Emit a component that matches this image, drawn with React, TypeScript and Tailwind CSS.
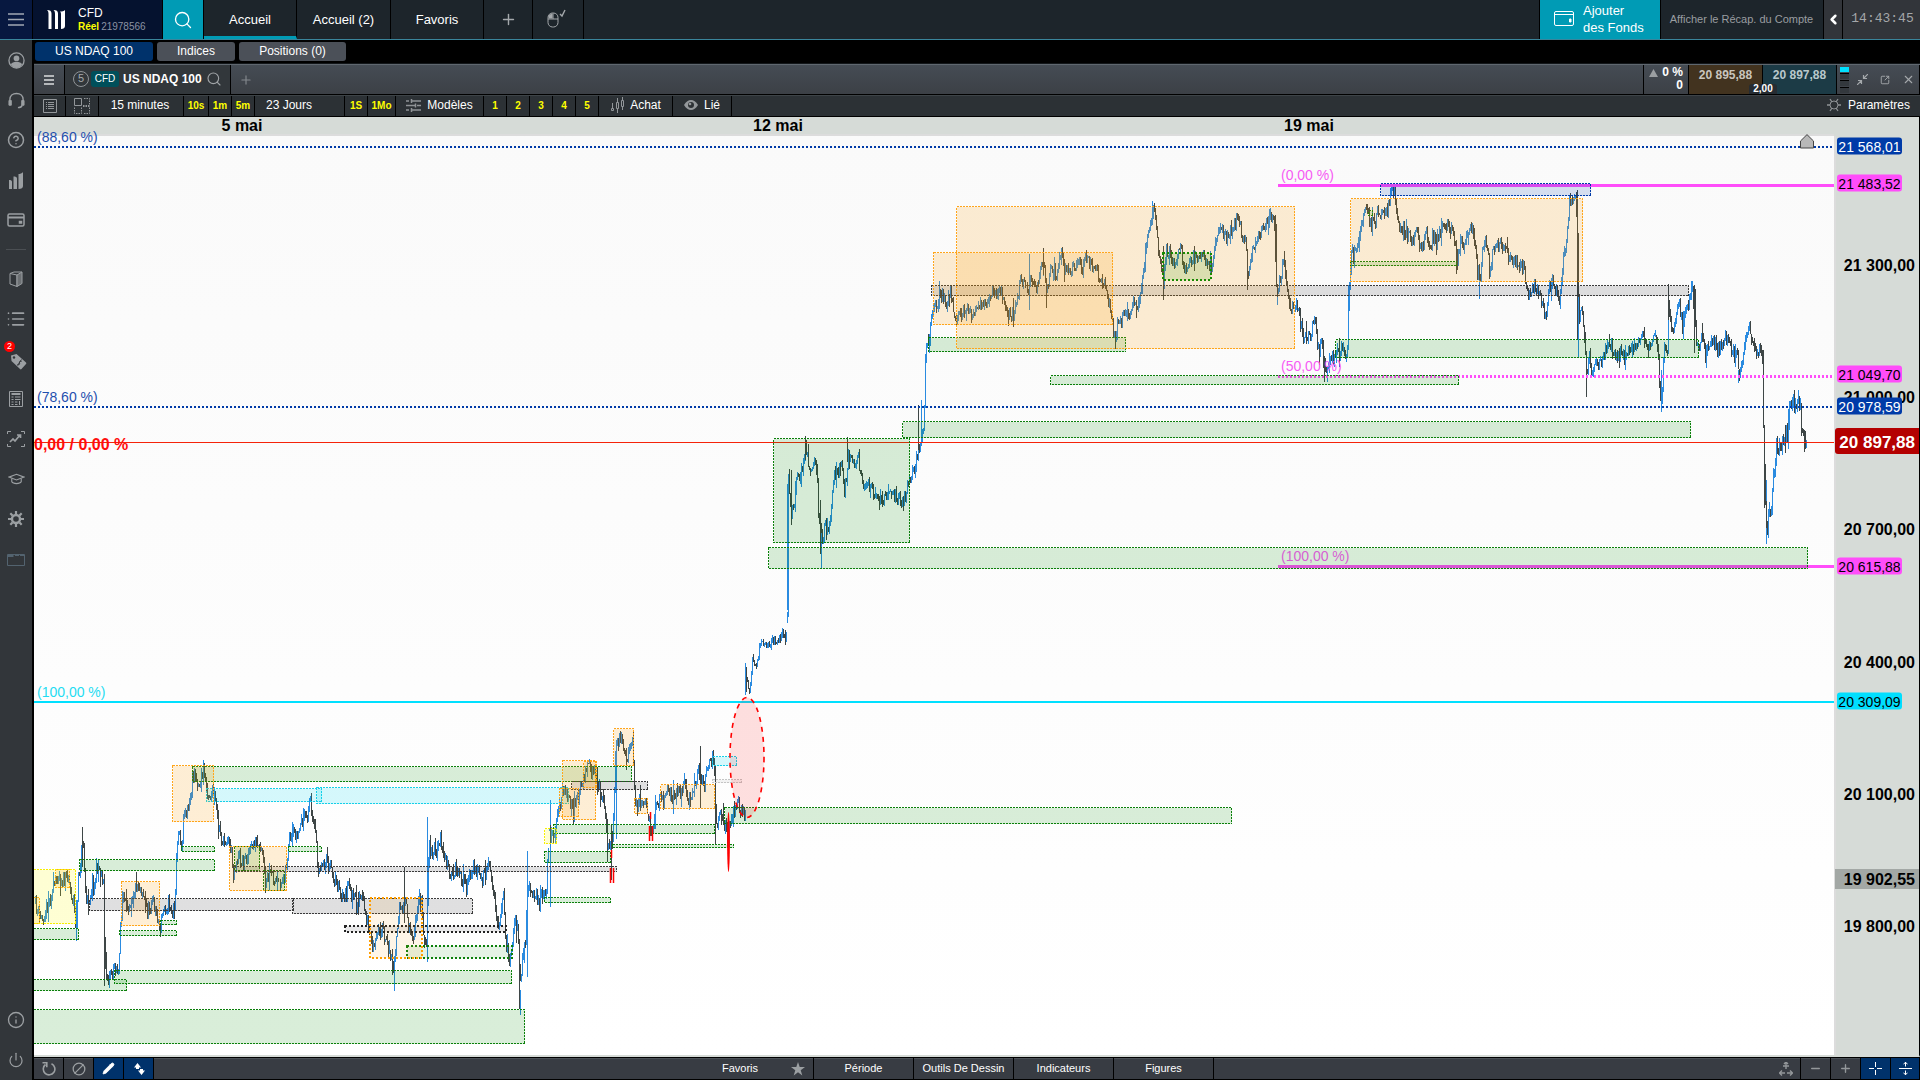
import type { ReactNode } from 'react'
import {
  ChevronLeft, Ban, Pencil, Plus, Minus, CircleHelp, List, Info, Power, Search, X, SquareArrowOutUpRight,
} from 'lucide-react'

// plot canvas, in chart units
const LEFT = 34
const TOP = 136
const WIDTH = 1800
const HEIGHT = 919

const priceToY = (price: number) => 265 + (21300 - price) * 0.44083
const topPct = (y: number) => `${((y - TOP) / HEIGHT) * 100}%`
const leftPct = (x: number) => `${((x - LEFT) / WIDTH) * 100}%`

type Segment = { x: number; y: number; sx: number; vol: number; points: number[] }

// price path: flat x,y pairs in local units of each segment
const SEGMENTS: Segment[] = [
  {
    x: 0, y: 740, sx: 2.8, vol: 13,
    points: [
      97, 490, 108, 525, 118, 535, 125, 520, 133, 490, 145, 460, 155, 420, 162, 400, 170, 420, 178, 425, 190, 400, 197, 460,
      205, 480, 212, 580, 218, 430, 224, 370, 231, 280, 236, 420, 241, 490, 250, 470, 256, 430, 263, 440, 268, 390, 275, 380,
      285, 410, 289, 440, 292, 650, 297, 700, 303, 720, 308, 690, 316, 700, 320, 665, 326, 690, 332, 700, 336, 560, 341, 480,
      346, 470, 352, 510, 360, 490, 372, 460, 383, 430, 392, 440, 402, 470, 412, 520, 420, 500, 425, 480, 432, 500, 440, 530,
      446, 570, 452, 530, 460, 500, 472, 490, 482, 520, 488, 490, 492, 380, 499, 260, 508, 330, 514, 200, 520, 220, 528, 210,
      538, 120, 545, 90, 553, 140, 562, 110, 570, 90, 578, 140, 586, 170, 595, 160, 601, 180, 608, 250, 618, 290, 626, 310,
      636, 290, 645, 320, 652, 400, 658, 370, 668, 350, 680, 370, 690, 345, 700, 330, 712, 310, 722, 330, 734, 340, 742, 430,
      755, 400, 765, 410, 778, 440, 790, 420, 802, 370, 808, 310, 815, 300, 823, 280, 832, 290, 840, 250, 850, 235, 860, 220,
      867, 180, 875, 220, 883, 290, 888, 380, 895, 380, 905, 365, 915, 375, 925, 390, 935, 415, 945, 440, 955, 475, 965, 465,
      973, 440, 985, 465, 997, 490, 1012, 470, 1020, 510, 1030, 560, 1038, 600, 1047, 630, 1056, 580, 1068, 560, 1078, 610,
      1090, 630, 1102, 690, 1110, 570, 1118, 490, 1126, 530, 1133, 480, 1142, 550, 1155, 590, 1163, 530, 1172, 490, 1180, 480,
      1187, 620, 1194, 600, 1197, 400, 1200, 310, 1210, 340, 1222, 340, 1232, 300, 1240, 340, 1250, 370, 1258, 410, 1268, 400,
      1278, 380, 1290, 410, 1305, 440, 1315, 400, 1325, 385, 1337, 395, 1350, 420, 1360, 400, 1368, 380, 1378, 430, 1388, 520,
      1396, 560, 1404, 490, 1410, 470, 1416, 620, 1425, 650, 1433, 620, 1441, 530, 1448, 570, 1454, 690, 1458, 740, 1464, 620,
      1470, 600, 1475, 460, 1482, 450, 1490, 480, 1500, 475, 1512, 465, 1520, 450, 1528, 470, 1532, 350, 1537, 280,
    ],
  },
  {
    x: 500, y: 640, sx: 3, vol: 13,
    points: [
      145, 570, 152, 600, 162, 590, 168, 540, 176, 500, 185, 460, 193, 450, 203, 470, 212, 505, 220, 500, 230, 460, 240, 450,
      250, 410, 262, 370, 272, 390, 285, 400, 292, 440, 300, 450, 310, 480, 316, 540, 322, 610, 330, 620, 336, 600, 341, 480,
      345, 340, 352, 310, 362, 300, 370, 330, 378, 360, 388, 320, 396, 310, 400, 400, 404, 490, 412, 500, 420, 480, 428, 500,
      435, 490, 445, 530, 453, 570, 462, 530, 468, 495, 476, 480, 482, 450, 488, 490, 496, 460, 508, 460, 520, 480, 530, 450,
      545, 450, 553, 430, 560, 460, 570, 470, 580, 455, 588, 410, 597, 390, 603, 430, 612, 430, 620, 380, 630, 370, 640, 360,
      645, 500, 648, 570, 656, 510, 665, 510, 672, 560, 684, 590, 692, 530, 702, 520, 712, 480, 722, 510, 730, 520, 735, 510,
    ],
  },
  {
    x: 500, y: 640, sx: 3, vol: 8,
    points: [
      737, 120, 742, 130, 746, 160, 752, 120, 756, 60, 765, 90, 775, 40, 782, -10, 790, 15, 800, 10, 815, 5, 830, 0, 840, -6,
      846, -20, 855, -3, 860, -22,
    ],
  },
  {
    x: 740, y: 180, sx: 2.703, vol: 11,
    points: [
      127, 1330, 128, 900, 131, 900, 137, 1010, 145, 970, 152, 900, 160, 890, 168, 880, 176, 800, 183, 850, 192, 870, 200, 850,
      207, 870, 211, 1000, 217, 1050, 222, 1100, 228, 1030, 236, 1050, 245, 980, 252, 880, 258, 890, 265, 870, 273, 860,
      281, 930, 288, 880, 291, 820, 300, 830, 310, 860, 318, 820, 325, 890, 335, 920, 348, 910, 360, 935, 372, 950, 382, 975,
      392, 950, 405, 930, 418, 945, 430, 950, 438, 965, 446, 940, 455, 910, 465, 880, 475, 840, 484, 800, 490, 750, 496, 750,
      497, 680, 500, 560, 503, 480, 511, 480, 516, 420, 522, 380, 530, 390, 538, 340, 546, 335, 555, 380, 566, 330, 574, 350,
      578, 415, 588, 410, 600, 400, 612, 385, 625, 410, 638, 390, 650, 380, 662, 370, 672, 345, 688, 340, 700, 320, 708, 350,
      718, 390, 726, 400, 738, 400, 748, 360, 757, 290, 768, 310, 778, 330, 783, 300, 792, 320, 802, 330, 810, 260, 820, 260,
      829, 330, 838, 280, 845, 260, 855, 290, 863, 240, 870, 220, 876, 270, 888, 270, 900, 265, 912, 250, 925, 270, 935, 230,
      945, 250, 960, 260, 972, 310, 983, 300, 992, 350, 1002, 400, 1012, 480, 1020, 430, 1030, 430, 1042, 385, 1052, 400,
      1060, 370, 1070, 370, 1080, 370, 1088, 280, 1097, 200, 1105, 160, 1115, 90, 1122, 110, 1130, 220, 1140, 260, 1144, 310,
      1150, 210, 1160, 230, 1172, 245, 1182, 230, 1190, 200, 1198, 270, 1206, 275, 1218, 240, 1230, 230, 1245, 220, 1258, 235,
      1270, 250, 1275, 260, 1283, 200, 1292, 145, 1302, 155, 1314, 180, 1328, 150, 1340, 120, 1352, 140, 1358, 190, 1366, 170,
      1371, 290, 1380, 220, 1390, 195, 1400, 170, 1412, 150, 1422, 120, 1435, 110, 1446, 130, 1449, 340, 1458, 300, 1470, 240,
      1477, 330, 1487, 390, 1497, 380,
    ],
  },
  {
    x: 1280, y: 160, sx: 2.8, vol: 12,
    points: [
      40, 450, 48, 430, 56, 490, 65, 540, 75, 525, 86, 520, 95, 470, 103, 550, 108, 580, 115, 540, 124, 640, 132, 640, 140, 590,
      148, 600, 157, 560, 165, 580, 173, 550, 181, 580, 187, 580, 190, 450, 194, 360, 200, 260, 206, 290, 214, 250, 225, 210,
      238, 130, 248, 180, 258, 190, 266, 200, 272, 140, 280, 160, 290, 140, 300, 150, 308, 95, 320, 95, 326, 160, 332, 210,
      345, 215, 360, 230, 372, 240, 383, 190, 390, 270, 400, 250, 410, 220, 420, 250, 430, 230, 440, 240, 450, 215, 460, 185,
      470, 200, 480, 220, 488, 250, 494, 310, 503, 250, 515, 250, 525, 220, 534, 200, 545, 250, 552, 340, 560, 340, 570, 240,
      580, 270, 586, 340, 595, 270, 605, 255, 617, 240, 628, 270, 642, 290, 655, 300, 670, 325, 680, 320, 690, 390, 700, 405,
      710, 370, 722, 390, 735, 440, 743, 480, 752, 390, 762, 360, 770, 390, 782, 430, 788, 330, 795, 290, 803, 230, 808, 130,
      817, 110, 827, 100, 832, 250, 836, 480, 842, 430, 848, 480, 852, 520, 858, 660, 864, 560, 870, 640, 880, 620, 892, 610,
      903, 600, 913, 560, 920, 545, 930, 580, 940, 600, 952, 580, 965, 585, 977, 570, 990, 560, 1002, 550, 1015, 530, 1028, 545,
      1040, 545, 1050, 530, 1058, 580, 1063, 700, 1068, 740, 1071, 620, 1076, 540, 1083, 600, 1087, 420, 1095, 500, 1100, 510,
      1107, 470, 1117, 430, 1127, 510, 1135, 440, 1145, 430, 1153, 390, 1160, 400, 1164, 550, 1172, 560, 1180, 510, 1190, 590,
      1200, 560, 1212, 540, 1225, 570, 1235, 550, 1248, 535, 1258, 560, 1270, 580, 1280, 590, 1286, 640, 1294, 600, 1302, 520,
      1312, 505, 1322, 560, 1330, 580, 1340, 570, 1349, 570, 1352, 760, 1355, 930, 1359, 1080, 1363, 1110,
    ],
  },
  {
    x: 1280, y: 160, sx: 2.8, vol: 20,
    points: [
      1363, 1090, 1368, 1040, 1373, 1080, 1378, 1000, 1384, 900, 1390, 850, 1396, 870, 1401, 880, 1405, 820, 1412, 850,
      1418, 820, 1424, 760, 1430, 730, 1440, 720, 1448, 740, 1455, 740, 1461, 820, 1466, 850, 1474, 855,
    ],
  },
]

// long wicks: x, high, low
const UP_WICKS = [
  [427, 817, 962], [527, 851, 977], [520, 990, 1015], [394, 960, 991], [203, 760, 785], [787, 484, 610], [821, 530, 569],
  [921, 400, 446], [1029, 254, 310], [1152, 201, 225], [1277, 290, 305], [1348, 285, 345], [1578, 285, 357], [1479, 265, 299],
  [1661, 370, 412], [1691, 281, 300], [1766, 480, 544], [1738, 370, 383], [616, 740, 839], [550, 800, 907], [76, 900, 941],
  [745, 663, 695],
]
const DOWN_WICKS = [
  [82, 827, 867], [104, 874, 986], [404, 867, 923], [519, 958, 1009], [700, 746, 808], [715, 765, 844], [918, 405, 450],
  [820, 500, 554], [847, 437, 462], [805, 436, 460], [1043, 248, 275], [1046, 290, 308], [1008, 310, 326], [1163, 246, 300],
  [1247, 250, 290], [1275, 215, 262], [1115, 340, 349], [1577, 190, 340], [1586, 360, 397], [1668, 284, 320], [1694, 285, 353],
  [1763, 350, 400], [1764, 440, 508], [607, 819, 862], [611, 825, 880], [791, 470, 525], [1456, 250, 274], [1324, 360, 382],
  [746, 667, 692],
]

function buildBars() {
  let seed = 11
  const rand = () => {
    seed = (seed * 16807) % 2147483647
    return seed / 2147483647
  }
  let up = ''
  let down = ''
  for (const s of SEGMENTS) {
    const xs: number[] = []
    const ys: number[] = []
    for (let i = 0; i < s.points.length; i += 2) {
      xs.push(s.x + s.points[i] / s.sx)
      ys.push(s.y + s.points[i + 1] / 3)
    }
    let k = 0
    let prev = ys[0]
    for (let x = Math.ceil(xs[0]); x <= xs[xs.length - 1]; x++) {
      while (k < xs.length - 2 && xs[k + 1] < x) k++
      const t = Math.min(1, Math.max(0, (x - xs[k]) / (xs[k + 1] - xs[k])))
      const y = ys[k] + (ys[k + 1] - ys[k]) * t + (rand() - 0.5) * s.vol
      const wick = rand() < 0.15 ? s.vol : s.vol * 0.4
      const high = Math.round(Math.min(prev, y) - rand() * wick)
      const low = Math.round(Math.max(prev, y) + rand() * wick)
      const bar = `M${x + 0.5} ${high}V${low}`
      if (y < prev) up += bar
      else down += bar
      prev = y
    }
  }
  for (const [x, a, b] of UP_WICKS) up += `M${x + 0.5} ${a}V${b}`
  for (const [x, a, b] of DOWN_WICKS) down += `M${x + 0.5} ${a}V${b}`
  return { up, down }
}

const BARS = buildBars()

type ZoneKind =
  | 'green' | 'greenBold' | 'greenDeep' | 'grey' | 'greyBold' | 'greySoft' | 'blue' | 'cyan' | 'orange' | 'orangeBold' | 'yellow'

const ZONE_STYLE: Record<ZoneKind, { fill: string; opacity: number; stroke: string; bold?: boolean }> = {
  green: { fill: '#008a00', opacity: 0.15, stroke: '#0a7f0a' },
  greenBold: { fill: '#008a00', opacity: 0.1, stroke: '#0a7f0a', bold: true },
  greenDeep: { fill: '#2f9a00', opacity: 0.16, stroke: '#178a00', bold: true },
  grey: { fill: '#222228', opacity: 0.14, stroke: '#3a3a3a' },
  greyBold: { fill: '#222228', opacity: 0.1, stroke: '#222222', bold: true },
  greySoft: { fill: '#222228', opacity: 0.05, stroke: '#c4c4c4' },
  blue: { fill: '#003eb0', opacity: 0.15, stroke: '#003ba8' },
  cyan: { fill: '#00d8f5', opacity: 0.16, stroke: '#16cfe8' },
  orange: { fill: '#ff9d00', opacity: 0.16, stroke: '#ffa51a' },
  orangeBold: { fill: '#ff9d00', opacity: 0.09, stroke: '#ff9d00', bold: true },
  yellow: { fill: '#ffff00', opacity: 0.17, stroke: '#f7ee00' },
}

// x1, y1, x2, y2
const ZONES: [ZoneKind, number, number, number, number][] = [
  ['green', 30, 928, 79, 939], ['green', 79, 859, 215, 870], ['green', 181, 846, 215, 851], ['green', 192, 766, 632, 781],
  ['green', 288, 846, 322, 851], ['green', 234, 846, 260, 870], ['green', 263, 870, 285, 890], ['green', 119, 930, 177, 935],
  ['green', 160, 920, 177, 924], ['green', 114, 970, 512, 983], ['green', 30, 979, 127, 990], ['green', 30, 1009, 525, 1043],
  ['greenBold', 406, 945, 512, 957], ['green', 544, 851, 611, 862], ['green', 553, 824, 715, 833], ['green', 612, 844, 734, 847],
  ['green', 544, 897, 611, 902], ['green', 724, 807, 1232, 823], ['green', 773, 438, 910, 542], ['green', 902, 421, 1691, 437],
  ['green', 768, 547, 1808, 568], ['green', 928, 337, 1126, 351], ['green', 1050, 375, 1459, 384],
  ['green', 1350, 261, 1457, 265], ['green', 1335, 339, 1699, 357], ['green', 1368, 210, 1373, 215],
  ['grey', 89, 898, 294, 910], ['grey', 292, 898, 473, 913], ['grey', 233, 866, 617, 871], ['greyBold', 344, 925, 506, 931],
  ['grey', 571, 781, 648, 789], ['greySoft', 712, 779, 742, 782], ['grey', 931, 285, 1689, 295],
  ['blue', 1380, 183, 1591, 195],
  ['cyan', 206, 788, 322, 801], ['cyan', 316, 787, 569, 803], ['cyan', 712, 756, 737, 765],
  ['orange', 172, 765, 214, 821], ['orange', 121, 881, 160, 925], ['orange', 229, 846, 287, 890],
  ['orangeBold', 369, 897, 422, 957], ['orange', 30, 897, 40, 923], ['orange', 55, 869, 70, 887], ['orange', 562, 760, 596, 819],
  ['orange', 583, 761, 597, 787], ['orange', 559, 788, 579, 816], ['orange', 613, 728, 634, 765], ['orange', 634, 798, 648, 813],
  ['orange', 660, 784, 715, 808], ['orange', 956, 206, 1295, 348], ['orange', 933, 252, 1113, 324],
  ['orange', 1350, 198, 1583, 281],
  ['yellow', 30, 869, 76, 923], ['yellow', 544, 828, 557, 843],
  ['greenDeep', 1162, 252, 1211, 279],
]

const PLOT_LABELS = [
  { text: '(88,60 %)', x: 37, y: 137, className: 'text-sm text-[#1f4fae]' },
  { text: '(78,60 %)', x: 37, y: 397, className: 'text-sm text-[#1f4fae]' },
  { text: '(100,00 %)', x: 37, y: 692, className: 'text-sm text-[#1fdcf2]' },
  { text: '(0,00 %)', x: 1281, y: 175, className: 'text-sm text-[#f65cf4]' },
  { text: '(50,00 %)', x: 1281, y: 366, className: 'text-sm text-[#f65cf4]' },
  { text: '(100,00 %)', x: 1281, y: 556, className: 'text-sm text-[#d65fd3]' },
  { text: '0,00 / 0,00 %', x: 34, y: 445, className: 'text-base font-bold text-[#ff0d0d]' },
]

const AXIS_TICKS = [
  { price: 21300, text: '21 300,00' },
  { price: 21000, text: '21 000,00' },
  { price: 20700, text: '20 700,00' },
  { price: 20400, text: '20 400,00' },
  { price: 20100, text: '20 100,00' },
  { price: 19800, text: '19 800,00' },
]

const AXIS_TAGS = [
  { price: 21568.01, text: '21 568,01', className: 'bg-[#003ba8] text-white' },
  { price: 21483.52, text: '21 483,52', className: 'bg-[#ff4dfa] text-black' },
  { price: 21049.7, text: '21 049,70', className: 'bg-[#ff4dfa] text-black' },
  { price: 20978.59, text: '20 978,59', className: 'bg-[#003ba8] text-white' },
  { price: 20615.88, text: '20 615,88', className: 'bg-[#ff4dfa] text-black' },
  { price: 20309.09, text: '20 309,09', className: 'bg-[#00dfff] text-black' },
]

function LogoBars() {
  return (
    <svg viewBox="0 0 18 19" className="h-[19px] w-[18px]" fill="currentColor">
      <path d="M0 0c3 0 4.500 1 4.500 3.500V19H1.500V4C1.500 2 1 .8 0 0zM6.500 0c3 0 4.500 1 4.500 3.500V19H8V4C8 2 7.500.8 6.500 0zM13 1.500C15 1.500 17 1 18 0v16c0 2-1.500 3-4 3V4c0-1.200-.3-2-1-2.500z" />
    </svg>
  )
}

function BarsIcon() {
  return (
    <svg viewBox="0 0 14 17" className="h-[17px] w-3.5" fill="currentColor">
      <path d="M0 8c2 0 3 .5 3 2v7H0zM4.500 4.500c2 0 3.500.5 3.500 2V17H4.500zM9.500 2C11 2 13 1.500 14 0v14c0 2-1.500 3-4.500 3z" />
    </svg>
  )
}

function UserIcon() {
  return (
    <svg viewBox="0 0 18 18" className="size-[17px]" fill="none" stroke="currentColor" strokeWidth="1.400">
      <circle cx="9" cy="9" r="8" />
      <circle cx="9" cy="6.800" r="3" fill="currentColor" stroke="none" />
      <path d="M3 13c1-2 3-2.500 6-2.500s5 .5 6 2.500c-1.500 2.500-3.500 4-6 4s-4.500-1.500-6-4z" fill="currentColor" stroke="none" />
    </svg>
  )
}

function HeadsetIcon() {
  return (
    <svg viewBox="0 0 18 18" className="size-[17px]" fill="none" stroke="currentColor" strokeWidth="1.500">
      <path d="M2 10V8c0-4 3-6.500 7-6.500S16 4 16 8v2" />
      <path d="M1 9h2.500v5H1zM14.500 9H17v5h-2.500z" fill="currentColor" strokeWidth="1" />
      <path d="M15 14c-.5 2-2 2.500-4.500 2.500" />
    </svg>
  )
}

function CardIcon() {
  return (
    <svg viewBox="0 0 18 14" className="h-3.5 w-[18px]" fill="none" stroke="currentColor" strokeWidth="1.500">
      <rect x="1" y="1" width="16" height="12" rx="1.500" />
      <path d="M1 4.500h16" strokeWidth="2" />
      <path d="M12.500 8.500h2v1.500h-2z" />
    </svg>
  )
}

function LeafletIcon() {
  return (
    <svg viewBox="0 0 14 16" className="h-4 w-3.5" fill="none" stroke="currentColor">
      <path d="M1 2.500L8 4v11.500L1 13zM1 2.500L5 1h8" />
      <path d="M8 4l5-3v11.500l-5 3z" fill="#6d7174" />
    </svg>
  )
}

function TagIcon() {
  return (
    <svg viewBox="0 0 17 17" className="mt-1 ml-1 size-[17px]">
      <path d="M1 2.500L6.500 1 16 9.500c.5.500.5 1 0 1.500l-4.500 5c-.5.500-1 .5-1.500 0L1.500 8z" fill="currentColor" />
      <circle cx="4" cy="4.500" r="1.200" fill="#32363a" />
      <path d="M11.500 8.500c-1.500-1-2.500.5-2 1.500s-.5 2.500-2 1.500M11.500 6.500l-4 6" stroke="#32363a" fill="none" />
    </svg>
  )
}

function ReportIcon() {
  return (
    <svg viewBox="0 0 14 16" className="h-4 w-3.5" fill="none" stroke="currentColor">
      <path d="M.5.500h13v15H.5z" />
      <path d="M2.500 3h9" strokeWidth="2" />
      <path d="M2.500 6h2M6 6h5.500M2.500 8.500h2M6 8.500h5.500M2.500 11h2M6 11h2.500M2.500 13.500h2M6 13.500h2.500M10.500 10v4" />
    </svg>
  )
}

function ScanChart() {
  return (
    <svg viewBox="0 0 18 18" className="size-[18px]" fill="none" stroke="currentColor">
      <path d="M.5 4V1.500H4M14 1.500h3.500V4M.5 14v2.500H4M14 16.500h3.500V14" />
      <path d="M3 12l3-3 2 2 5-6M10 5h3.500v3" strokeWidth="1.700" />
    </svg>
  )
}

function CapIcon() {
  return (
    <svg viewBox="0 0 18 12" className="h-3 w-[17px]" fill="none" stroke="currentColor" strokeWidth="1.200">
      <path d="M1 4l8-3 8 3-8 3z" />
      <path d="M4 5.500V9c1.500 2.500 8.500 2.500 10 0V5.500" />
    </svg>
  )
}

function CogIcon() {
  return (
    <svg viewBox="0 0 16 16" className="size-4" fill="none" stroke="currentColor">
      <circle cx="8" cy="8" r="4" strokeWidth="2.400" />
      <path
        d="M8 0v3M8 13v3M0 8h3M13 8h3M2.300 2.300l2.200 2.200M11.500 11.500l2.200 2.200M13.700 2.300l-2.200 2.200M4.500 11.500l-2.200 2.200"
        strokeWidth="2.200"
      />
    </svg>
  )
}

function WindowIcon() {
  return (
    <svg viewBox="0 0 18 13" className="h-[13px] w-[18px]" fill="none" stroke="currentColor">
      <path d="M.5 1.500h17v11H.5z" />
      <path d="M.5 3h6M8 2h4M13 2h4" strokeWidth="2" />
    </svg>
  )
}

function MouseIcon() {
  return (
    <svg viewBox="0 0 20 20" className="size-5" fill="none" stroke="#a4a8ab">
      <rect x="2" y="4" width="10" height="14" rx="4.500" />
      <path d="M2 10h10M7 4v6" />
      <path d="M3 9V6.500L6 5v4z" fill="#a4a8ab" />
      <path d="M14 5l2 2 3-6" strokeWidth="1.400" />
    </svg>
  )
}

function CandlesIcon() {
  return (
    <svg viewBox="0 0 16 16" className="size-4" fill="none" stroke="#93979a">
      <path d="M2.500 6v5M7.500 1v4M7.500 12v4M12.500 0v3M12.500 10v3" />
      <path d="M1.500 11.500h2v2h-2zM6.500 5.500h2v6h-2zM11.500 3.500h2v6h-2z" />
    </svg>
  )
}

function GridIcon() {
  return (
    <svg viewBox="0 0 16 16" className="size-4" fill="none" stroke="#93979a">
      <path d="M.5.500h7v7h-7z" />
      <path d="M10 .5h5.500v7H8M.5 9.500v6h7v-6M9 8.500h6.500v7H9" strokeDasharray="1.500 1" />
    </svg>
  )
}

function SheetIcon() {
  return (
    <svg viewBox="0 0 14 14" className="size-3.5" fill="none" stroke="#93979a">
      <path d="M.5.500h13v13H.5z" />
      <path d="M3 3.500h1M5 3.500h6M3 5.500h1M5 5.500h6M3 7.500h1M5 7.500h6M3 9.500h1M5 9.500h6" />
    </svg>
  )
}

function TemplatesIcon() {
  return (
    <svg viewBox="0 0 15 13" className="h-[13px] w-[15px]" fill="none" stroke="#8f9396" strokeWidth="1.500">
      <path d="M0 2h3M5 2h10M0 6.500h9M11 6.500h4M0 11h3M5 11h10" />
      <path d="M5.500 0v4M9.500 4.500v4M5.500 9v4" />
    </svg>
  )
}

function EyeIcon() {
  return (
    <svg viewBox="0 0 14 10" className="h-2.5 w-3.5">
      <path d="M0 5c2-3.500 4.500-5 7-5s5 1.500 7 5c-2 3.500-4.500 5-7 5S2 8.500 0 5z" fill="#94989b" />
      <circle cx="7" cy="5" r="3" fill="#2c3135" />
      <circle cx="6" cy="4" r="1.300" fill="#94989b" />
    </svg>
  )
}

function GearOutline() {
  return (
    <svg viewBox="0 0 14 14" className="size-3.5" fill="none" stroke="#8e9295">
      <circle cx="7" cy="7" r="4" />
      <path d="M0 7h3M11 7h3M3 1l2 3M9 10l2 3M11 1L9 4M5 10l-2 3" strokeWidth="1.300" />
    </svg>
  )
}

type SideIcon = { label: string; icon: ReactNode; badge?: string; dim?: boolean }

const SIDE_ICONS: SideIcon[] = [
  { label: 'Profil', icon: <UserIcon /> },
  { label: 'Assistance', icon: <HeadsetIcon /> },
  { label: 'Aide', icon: <CircleHelp size={18} strokeWidth={2} /> },
  { label: 'CMC', icon: <BarsIcon /> },
  { label: 'Paiements', icon: <CardIcon /> },
]

const TOOL_ICONS: SideIcon[] = [
  { label: 'Produits', icon: <LeafletIcon /> },
  { label: 'Listes', icon: <List size={20} strokeWidth={2} /> },
  { label: 'Offres', icon: <TagIcon />, badge: '2' },
  { label: 'Rapports', icon: <ReportIcon /> },
  { label: 'Analyses', icon: <ScanChart /> },
  { label: 'Formation', icon: <CapIcon /> },
  { label: 'Réglages', icon: <CogIcon /> },
  { label: 'Fenêtres', icon: <WindowIcon />, dim: true },
]

function SideButton({ label, badge, dim, children }: { label: string; badge?: string; dim?: boolean; children: ReactNode }) {
  return (
    <button
      aria-label={label}
      className={`relative flex h-10 w-8 items-center justify-center ${dim ? 'text-[#53636f]' : 'text-[#9b9fa2]'}`}
    >
      {children}
      {badge && (
        <span className="absolute top-0.5 left-1 flex size-[11px] items-center justify-center rounded-full bg-[#f00] text-[9px] leading-none text-white">
          {badge}
        </span>
      )}
    </button>
  )
}

function Sidebar() {
  return (
    <aside className="flex w-[34px] shrink-0 flex-col border-r-2 border-black bg-[#32363a]">
      {SIDE_ICONS.map(s => <SideButton key={s.label} label={s.label}>{s.icon}</SideButton>)}
      <div className="mx-1.5 my-[9px] h-px shrink-0 bg-[#4b4f53]" />
      {TOOL_ICONS.map(s => <SideButton key={s.label} label={s.label} badge={s.badge} dim={s.dim}>{s.icon}</SideButton>)}
      <div className="mt-auto">
        <SideButton label="Informations"><Info size={18} strokeWidth={1.800} /></SideButton>
        <SideButton label="Déconnexion"><Power size={16} strokeWidth={1.800} /></SideButton>
      </div>
    </aside>
  )
}

function TopBar() {
  return (
    <header className="flex h-10 shrink-0 border-b border-[#3a859b] bg-[#1d252b] text-[13px] text-white">
      <button aria-label="Menu" className="flex w-[33px] items-center justify-center border-r border-black bg-[#071840]">
        <svg viewBox="0 0 16 13" className="h-[13px] w-4" stroke="#a1a8b4" strokeWidth="1.500"><path d="M0 1h16M0 6.500h16M0 12h16" /></svg>
      </button>
      <div className="flex w-[130px] items-center border-r border-black bg-[#05122f] pl-3.5">
        <LogoBars />
        <div className="ml-[13px] leading-[13px]">
          <div className="text-xs leading-[13px]">CFD</div>
          <div className="flex gap-0.5 text-[10px] leading-[13px]">
            <b className="text-[#ff0]">Réel</b>
            <span className="text-[#8b93a3]">21978566</span>
          </div>
        </div>
      </div>
      <button aria-label="Rechercher" className="flex w-[41px] items-center justify-center border-r border-black bg-[#009bb5]">
        <Search size={20} strokeWidth={1.600} />
      </button>
      <nav className="flex">
        <a href="#accueil" className="flex w-[93px] items-center justify-center border-r border-b-3 border-r-black border-b-[#009bb5] pt-[3px]">Accueil</a>
        <a href="#accueil-2" className="flex w-[94px] items-center justify-center border-r border-black">Accueil (2)</a>
        <a href="#favoris" className="flex w-[93px] items-center justify-center border-r border-black">Favoris</a>
      </nav>
      <button aria-label="Ajouter un onglet" className="flex w-[49px] items-center justify-center border-r border-black">
        <Plus size={17} strokeWidth={2} color="#a4a8ab" />
      </button>
      <button aria-label="Mode souris" className="flex w-[51px] items-center justify-center border-r border-black pr-1 pb-0.5">
        <MouseIcon />
      </button>
      <button className="ml-auto flex w-[122px] items-center gap-[9px] border-x border-black bg-[#009bb5] pb-0.5 pl-3.5 text-left">
        <svg viewBox="0 0 20 15" className="h-[15px] w-5" fill="none" stroke="#fff">
          <rect x=".5" y=".5" width="19" height="14" rx="1.500" />
          <path d="M1 3.500h18" />
          <path d="M15.500 8h1.500v3h-1.500z" fill="#fff" />
        </svg>
        <span className="text-[13px] leading-[17px]">Ajouter<br />des Fonds</span>
      </button>
      <button className="w-[163px] border-r border-black pr-px text-[11px] text-[#9a9da0]">Afficher le Récap. du Compte</button>
      <button aria-label="Déplier" className="flex w-[19px] items-center justify-center border-r border-black bg-[#32353a]">
        <ChevronLeft size={15} strokeWidth={4} />
      </button>
      <time className="flex w-[77px] items-center justify-center bg-[#32353a] pb-0.5 pl-0.5 font-['Liberation_Mono',monospace] text-[13px] text-[#a4a7a9]">14:43:45</time>
    </header>
  )
}

function Workspaces() {
  return (
    <div className="flex h-6 shrink-0 gap-1 border-b border-[#13171a] bg-black pt-0.5 pb-0.5 pl-px text-xs text-white">
      <button className="w-[118px] rounded-[3px] bg-[#00326b] pb-0.5">US NDAQ 100</button>
      <button className="w-[78px] rounded-[3px] bg-[#4b5058] pb-0.5">Indices</button>
      <button className="w-[107px] rounded-[3px] bg-[#4b5058] pb-0.5">Positions (0)</button>
    </div>
  )
}

function PanelHeader() {
  return (
    <div className="flex h-[31px] shrink-0 border-t border-b border-t-[#5f676f] border-b-black bg-linear-to-b from-[#454c54] to-[#3c4046] text-xs text-white">
      <button aria-label="Menu du graphique" className="flex w-[31px] items-center justify-center border-r border-black">
        <svg viewBox="0 0 10 10" className="size-2.5" stroke="#b4b7ba" strokeWidth="2"><path d="M0 1h10M0 5h10M0 9h10" /></svg>
      </button>
      <div className="flex w-[166px] items-center border-r border-black bg-[#32373b] pb-0.5 pl-2">
        <span className="flex size-4 items-center justify-center rounded-full border border-[#909497] text-[11px] text-[#a5a8ab]">5</span>
        <span className="mr-1 ml-0.5 flex h-4 w-7 items-center justify-center rounded-[3px] bg-[#004f5a] text-[10px]">CFD</span>
        <b className="text-xs font-bold">US NDAQ 100</b>
        <button aria-label="Chercher un produit" className="ml-1"><Search size={16} strokeWidth={1.700} color="#a0a4a7" /></button>
      </div>
      <button aria-label="Nouveau" className="ml-2"><Plus size={14} strokeWidth={2} color="#83888d" /></button>
      <div className="ml-auto w-[46px] border-x border-black pt-px pr-[5px] text-right leading-[13px] font-bold">
        <div className="flex items-center justify-end gap-1">
          <svg viewBox="0 0 9 8" className="h-2 w-[9px]" fill="#9b9fa2"><path d="M4.500 0L9 8H0z" /></svg>
          0 %
        </div>
        <div>0</div>
      </div>
      <div className="relative flex">
        <button className="w-[74px] border-r border-black bg-[#42331f] pb-2.5 font-bold text-[#c9c5bd]">20 895,88</button>
        <button className="w-[74px] border-r border-black bg-[#1c3b46] pb-2.5 font-bold text-[#b9c8cc]">20 897,88</button>
        <span className="absolute bottom-0 left-[60px] flex h-2.5 w-7 items-center justify-center rounded-t-[3px] bg-[#262c32] text-[10px] leading-none font-bold">2,00</span>
      </div>
      <div className="flex w-[83px] items-center gap-2 border-r border-black pl-[3px] text-[#a5a9ac]">
        <div className="flex h-full w-[9px] flex-col gap-px pt-0.5">
          <i className="h-[5px] bg-[#00e0ff]" />
          <i className="h-1.5 border-t border-black bg-[#33383d]" />
          <i className="h-1.5 border-t border-black bg-[#33383d]" />
          <i className="h-1.5 border-t border-black bg-[#33383d]" />
        </div>
        <button aria-label="Réduire">
          <svg viewBox="0 0 11 11" className="size-[11px]" fill="none" stroke="currentColor" strokeWidth="1.200">
            <path d="M0 11l4-4M1 6.500h3.500V10M11 0L7 4M6.500 1v3.500H10" />
          </svg>
        </button>
        <button aria-label="Détacher" className="ml-1"><SquareArrowOutUpRight size={10} strokeWidth={2.200} /></button>
        <button aria-label="Fermer" className="ml-1"><X size={13} strokeWidth={2} /></button>
      </div>
    </div>
  )
}

const CELL = 'flex items-center justify-center border-r border-black'
const SHORTCUT = 'flex w-[23px] items-center justify-center border-r border-black text-[10px] font-bold text-[#ff0]'

function Toolbar() {
  return (
    <div className="flex h-[22px] shrink-0 border-t border-b border-t-[#3d4347] border-b-black bg-[#2c3135] text-xs text-white">
      <button aria-label="Liste" className={`${CELL} w-8`}><SheetIcon /></button>
      <button aria-label="Grille" className={`${CELL} w-[33px]`}><GridIcon /></button>
      <button className={`${CELL} w-[85px] pr-0.5 pb-0.5`}>15 minutes</button>
      <button className="flex w-[25px] items-center justify-center border-r border-black text-[10px] font-bold text-[#ff0]">10s</button>
      <button className={SHORTCUT}>1m</button>
      <button className={SHORTCUT}>5m</button>
      <button className="flex w-[90px] items-center border-r border-black pb-0.5 pl-[11px]">23 Jours</button>
      <button className={SHORTCUT}>1S</button>
      <button className="flex w-7 items-center justify-center border-r border-black text-[10px] font-bold text-[#ff0]">1Mo</button>
      <button className={`${CELL} w-[88px] gap-1.5 pb-0.5`}><TemplatesIcon />Modèles</button>
      {['1', '2', '3', '4', '5'].map(t => <button key={t} className={SHORTCUT}>{t}</button>)}
      <button className={`${CELL} w-[74px] gap-1 pb-0.5`}><CandlesIcon />Achat</button>
      <button className={`${CELL} w-[59px] gap-1.5 pb-0.5`}><EyeIcon />Lié</button>
      <button className="ml-auto flex items-center gap-[7px] pr-2.5 pb-0.5"><GearOutline />Paramètres</button>
    </div>
  )
}

function Plot() {
  return (
    <div className="relative min-w-0 flex-1 bg-linear-to-b from-[#fafafa] to-white">
      <svg
        viewBox={`${LEFT} ${TOP} ${WIDTH} ${HEIGHT}`}
        preserveAspectRatio="none"
        className="absolute inset-0 size-full"
        fill="none"
      >
        <g shapeRendering="crispEdges">
          <path d={BARS.up} stroke="#2a8be0" />
          <path d={BARS.down} stroke="#3e4646" />
          <path d="M34 147H1834M34 407H1834" stroke="#003ba8" strokeWidth="2" strokeDasharray="2 2" />
          <path d="M1278 185.500H1834M1278 566.500H1834" stroke="#ff4dfa" strokeWidth="3" />
          <path d="M1278 376.500H1834" stroke="#ff4dfa" strokeWidth="3" strokeDasharray="2 2" />
          <path d="M34 702H1834" stroke="#00e0ff" strokeWidth="2" />
          <path d="M34 442.500H1834" stroke="#f5230a" />
          {ZONES.map(([kind, x1, y1, x2, y2], i) => {
            const z = ZONE_STYLE[kind]
            return (
              <rect
                key={i}
                x={x1 + 0.5}
                y={y1 + 0.5}
                width={x2 - x1 - 1}
                height={y2 - y1}
                fill={z.fill}
                fillOpacity={z.opacity}
                stroke={z.stroke}
                strokeWidth={z.bold ? 2 : 1}
                strokeDasharray={z.bold ? '2 2' : '2 1'}
              />
            )
          })}
        </g>
        <ellipse cx="747" cy="757.500" rx="17" ry="60" fill="#ff0000" fillOpacity="0.12" stroke="#f00" strokeWidth="1.600" strokeDasharray="5 5" />
        <path d="M611.500 850v8M610.500 868v15M613.500 868v15" stroke="#f00" strokeWidth="1.500" />
        <path d="M650.500 812v7M649.500 826v15M652.500 826v15" stroke="#f00" strokeWidth="1.500" />
        <ellipse cx="728.500" cy="842" rx="1.400" ry="30" fill="#f00" />
      </svg>
      {PLOT_LABELS.map(l => (
        <span
          key={l.text + l.y}
          className={`absolute -translate-y-1/2 whitespace-nowrap ${l.className}`}
          style={{ left: leftPct(l.x), top: topPct(l.y) }}
        >
          {l.text}
        </span>
      ))}
      <svg viewBox="0 0 14 15" className="absolute -top-0.5 right-5 h-[15px] w-3.5" fill="#b8b8b8" stroke="#444">
        <path d="M.5 7L7 .6 13.500 7v7H.5z" />
      </svg>
    </div>
  )
}

function PriceAxis() {
  return (
    <div className="relative w-[85px] shrink-0 border-l-2 border-[#dcdcdc]">
      {AXIS_TICKS.map(t => (
        <span
          key={t.price}
          className="absolute right-1 -translate-y-1/2 font-bold whitespace-nowrap text-black"
          style={{ top: topPct(priceToY(t.price) + 1) }}
        >
          {t.text}
        </span>
      ))}
      {AXIS_TAGS.map(t => (
        <span
          key={t.price}
          className={`absolute left-px flex h-[17px] w-[65px] -translate-y-1/2 items-center justify-center rounded-[3px] pt-px text-sm whitespace-nowrap ${t.className}`}
          style={{ top: topPct(priceToY(t.price) - 1) }}
        >
          {t.text}
        </span>
      ))}
      <span
        className="absolute inset-x-0 -left-px flex h-[26px] -translate-y-1/2 items-center justify-end rounded-l-[3px] bg-[#b40000] pt-0.5 pr-1 text-[17px] font-bold whitespace-nowrap text-white"
        style={{ top: topPct(priceToY(20897.88) - 1) }}
      >
        20 897,88
      </span>
      <span
        className="absolute inset-x-0 -left-px flex h-5 -translate-y-1/2 items-center justify-end bg-[#a3a8a5] pt-0.5 pr-1 font-bold whitespace-nowrap text-black"
        style={{ top: topPct(priceToY(19902.55) - 2) }}
      >
        19 902,55
      </span>
    </div>
  )
}

const DATES = [
  { text: '5 mai', x: 242 },
  { text: '12 mai', x: 778 },
  { text: '19 mai', x: 1309 },
]

function Chart() {
  return (
    <section className="flex min-h-0 flex-1 flex-col border-r border-b-2 border-r-black border-b-[#d6dbd7] bg-[#d6dbd7] text-base">
      <div className="mr-[85px] flex h-[19px] shrink-0">
        <div className="relative flex-1 border-b-2 border-[#dcdcdc]">
          {DATES.map(d => (
            <span
              key={d.text}
              className="absolute -translate-x-1/2 leading-[17px] font-bold whitespace-nowrap text-black"
              style={{ left: leftPct(d.x) }}
            >
              {d.text}
            </span>
          ))}
        </div>
      </div>
      <div className="flex min-h-0 flex-1">
        <Plot />
        <PriceAxis />
      </div>
    </section>
  )
}

const FOOT = 'flex w-[30px] items-center justify-center border-r border-black'

function BottomBar() {
  return (
    <footer className="flex h-[23px] shrink-0 border-t border-b border-black bg-[#383c43] text-[11px] text-white shadow-[inset_0_1px_0_#4b5157]">
      <button aria-label="Actualiser" className={FOOT}>
        <svg viewBox="0 0 14 14" className="size-3.5" fill="none" stroke="#9b9fa2" strokeWidth="1.600">
          <path d="M9.500 1.800A5.800 5.800 0 1 1 3.500 2.500" />
          <path d="M.5.800h4.300v4.500" />
        </svg>
      </button>
      <button aria-label="Effacer" className={FOOT}><Ban size={14} strokeWidth={2.200} color="#9b9fa2" className="-scale-x-100" /></button>
      <button aria-label="Dessiner" className={`${FOOT} bg-[#00326b]`}><Pencil size={13} fill="#fff" strokeWidth={1.500} /></button>
      <button aria-label="Échelle" className={`${FOOT} bg-[#00326b]`}>
        <svg viewBox="0 0 12 12" className="size-3" fill="#fff"><path d="M1 4.500L4.500 0 8 4.500zM3 4h3v2H3zM5 7.500h7L8.500 12zM7 6h3v2H7z" /></svg>
      </button>
      <div className="flex flex-1 justify-center pr-11">
        <button className="relative w-[147px] border-r border-black">
          Favoris
          <svg viewBox="0 0 14 14" className="absolute top-1 right-2 size-3.5" fill="#9b9fa2">
            <path d="M7 0l1.700 5.100H14L9.700 8.300 11.300 13.500 7 10.300 2.700 13.500 4.300 8.300 0 5.100h5.300z" />
          </svg>
        </button>
        {['Période', 'Outils De Dessin', 'Indicateurs', 'Figures'].map(t => (
          <button key={t} className="w-[100px] border-r border-black">{t}</button>
        ))}
      </div>
      <button aria-label="Ajuster" className={FOOT}>
        <svg viewBox="0 0 14 14" className="size-3.5" fill="none" stroke="#93979a" strokeWidth="1.400">
          <path d="M7 0v7M4 4h6M5 2l2-2 2 2M1 11h5M8 11h5M3 8.500L.5 11 3 13.500M11 8.500l2.500 2.500-2.500 2.500" />
        </svg>
      </button>
      <button aria-label="Zoom arrière" className={FOOT}><Minus size={13} strokeWidth={2.500} color="#93979a" /></button>
      <button aria-label="Zoom avant" className={FOOT}><Plus size={13} strokeWidth={2.500} color="#93979a" /></button>
      <button aria-label="Réticule" className={`${FOOT} bg-[#00326b]`}>
        <svg viewBox="0 0 13 13" className="size-[13px]" stroke="#fff"><path d="M0 6.500h5M8 6.500h5M6.500 0v5M6.500 8v5" /></svg>
      </button>
      <button aria-label="Hauteur" className="flex w-[29px] items-center justify-center border-r border-black bg-[#00326b]">
        <svg viewBox="0 0 13 13" className="size-[13px]" fill="none" stroke="#fff">
          <path d="M0 6.500h13M6.500 0v4.500M6.500 8.500V13M4.500 2l2-1.500 2 1.500M4.500 11l2 1.500 2-1.500" />
        </svg>
      </button>
    </footer>
  )
}

export default function App() {
  return (
    <div className="flex h-screen flex-col overflow-hidden bg-black font-['Liberation_Sans',Arial,sans-serif]">
      <TopBar />
      <div className="flex min-h-0 flex-1">
        <Sidebar />
        <main className="flex min-w-0 flex-1 flex-col">
          <Workspaces />
          <PanelHeader />
          <Toolbar />
          <Chart />
          <BottomBar />
        </main>
      </div>
    </div>
  )
}
